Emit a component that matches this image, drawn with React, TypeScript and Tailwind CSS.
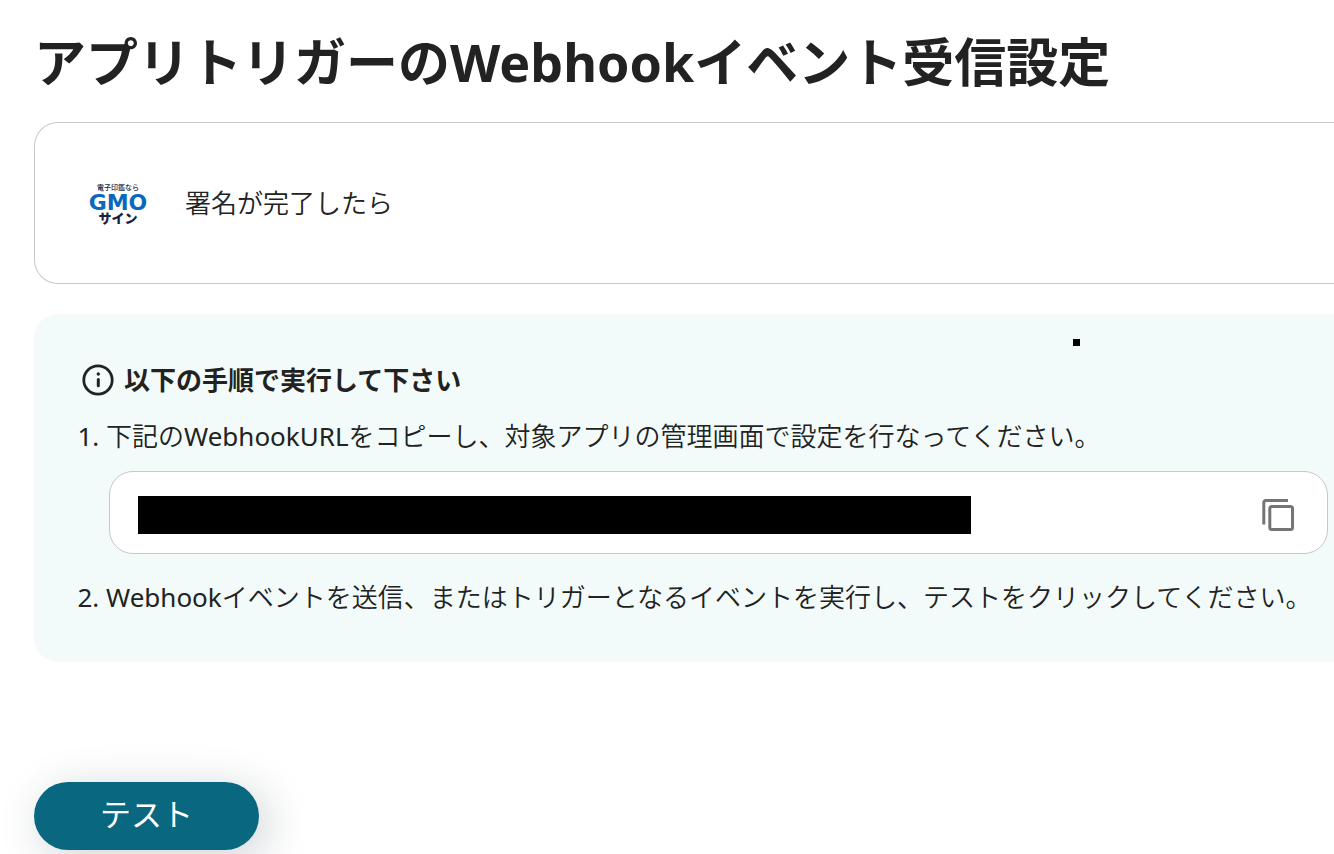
const steps = [
  {
    text: "下記のWebhookURLをコピーし、対象アプリの管理画面で設定を行なってください。",
    hasUrl: true,
  },
  {
    text: "Webhookイベントを送信、またはトリガーとなるイベントを実行し、テストをクリックしてください。",
    hasUrl: false,
  },
]

const GmoSignLogo = () => (
  <svg
    viewBox="0 0 64 52"
    className="w-16 h-[52px] shrink-0"
    role="img"
    aria-label="GMOサイン"
  >
    <g textAnchor="middle">
      <text
        x="33"
        y="13"
        fontSize="7"
        fontWeight="500"
        fill="#1b2a41"
        className="font-['Noto_Sans_CJK_JP',sans-serif]"
      >
        電子印鑑なら
      </text>
      <text
        x="33"
        y="33"
        fontSize="22"
        fontWeight="700"
        fill="#0a68bd"
        className="font-['DejaVu_Sans',sans-serif]"
      >
        GMO
      </text>
      <text
        x="33"
        y="46"
        fontSize="13"
        fontWeight="900"
        fill="#16233a"
        className="font-['Noto_Sans_CJK_JP',sans-serif]"
      >
        サイン
      </text>
    </g>
  </svg>
)

const InfoIcon = () => (
  <svg
    viewBox="0 0 32 32"
    className="size-8 shrink-0"
    fill="none"
    stroke="currentColor"
    aria-hidden="true"
  >
    <circle cx="16" cy="16" r="14.2" strokeWidth="2.8" />
    <circle cx="16.3" cy="10" r="1.7" fill="currentColor" stroke="none" />
    <path d="M16.3 15.4v6.4" strokeWidth="3" strokeLinecap="round" />
  </svg>
)

const CopyIcon = () => (
  <svg
    viewBox="0 0 32 32"
    className="size-8"
    fill="none"
    stroke="currentColor"
    strokeWidth="3"
    aria-hidden="true"
  >
    <path d="M1.8 25.5V3.5a2 2 0 0 1 2-2H26" />
    <rect x="7.8" y="7.5" width="22.7" height="23" rx="2" />
  </svg>
)

const WebhookUrl = () => (
  <div className="flex items-center justify-between mt-[15px] ml-[3px] mr-1.5 h-[83px] pt-[5px] pl-7 pr-[33px] rounded-3xl border border-[#c4c8c8] bg-white">
    <div className="flex-1 max-w-[833px] h-[38px] bg-black" />
    <button type="button" aria-label="コピー" className="text-[#757575]">
      <CopyIcon />
    </button>
  </div>
)

const App = () => {
  return (
    <main className="min-h-screen overflow-hidden bg-white pl-[34px] pt-[27px] pb-1 text-[26px] leading-10 text-[#222] font-['Noto_Sans','Noto_Sans_CJK_JP',sans-serif]">
      <h1 className="text-[52px] leading-[70px] font-bold">
        アプリトリガーのWebhookイベント受信設定
      </h1>

      <section className="flex items-center gap-9 mt-[25px] h-[162px] pl-[50px] rounded-l-3xl border border-r-0 border-[#c8c8c8]">
        <GmoSignLogo />
        <p className="font-['Noto_Sans','Noto_Sans_CJK_JP_DemiLight','Noto_Sans_CJK_JP',sans-serif]">
          署名が完了したら
        </p>
      </section>

      <section className="relative mt-[30px] pt-[46px] pb-[45px] pl-[46px] rounded-l-3xl bg-[#f2fbfa]">
        <span className="absolute top-[25px] right-[254px] size-[7px] bg-black" />
        <h2 className="flex items-center gap-2.5 pl-0.5 font-bold">
          <InfoIcon />
          以下の手順で実行して下さい
        </h2>
        <ol className="flex flex-col gap-[23px] mt-4 pl-[26px] list-decimal font-['Noto_Sans','Noto_Sans_CJK_JP_DemiLight','Noto_Sans_CJK_JP',sans-serif]">
          {steps.map(({ text, hasUrl }) => (
            <li key={text}>
              {text}
              {hasUrl && <WebhookUrl />}
            </li>
          ))}
        </ol>
      </section>

      <button
        type="button"
        className="mt-[120px] w-[225px] h-[68px] pb-1 rounded-full bg-[#0a6780] text-[31px] text-white shadow-[8px_8px_44px_rgba(30,50,65,0.22)]"
      >
        テスト
      </button>
    </main>
  )
}

export default App
